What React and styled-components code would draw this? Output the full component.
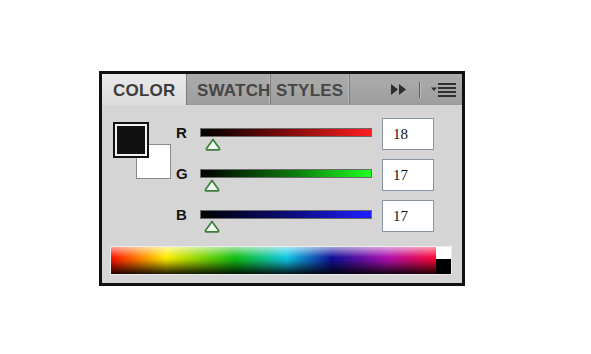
import React from "react";
import styled, { createGlobalStyle } from "styled-components";

const GlobalStyle = createGlobalStyle`
  html, body {
    margin: 0;
    padding: 0;
    background: #ffffff;
  }
  body {
    font-family: "Liberation Sans", Arial, sans-serif;
  }
`;

const channels = [
  { name: "R", value: 18, end: "#ff1f1f", mid: "#8a0c0c" },
  { name: "G", value: 17, end: "#1fff1f", mid: "#0c7a0c" },
  { name: "B", value: 17, end: "#1f1fff", mid: "#0c0c80" },
];

const tabs = [
  { label: "COLOR", width: 85, pad: 11, active: true },
  { label: "SWATCHES", width: 84, pad: 10 },
  { label: "STYLES", width: 79, pad: 5 },
];

const App = () => {
  return (
    <Page>
      <GlobalStyle />
      <Panel>
        <TabBar>
          {tabs.map(t => (
            <Tab key={t.label} active={t.active} w={t.width} pad={t.pad}>
              <TabText>{t.label}</TabText>
            </Tab>
          ))}
          <TabRest>
            <svg width="17" height="11" viewBox="0 0 17 11">
              <path d="M0 0 L7 5.5 L0 11 Z M8 0 L15 5.5 L8 11 Z" fill="#2e2e2e" />
            </svg>
            <Divider />
            <svg width="26" height="14" viewBox="0 0 26 14">
              <path d="M0 4.5 L6 4.5 L3 8 Z" fill="#2e2e2e" />
              <rect x="7" y="0" width="18" height="2" fill="#2e2e2e" />
              <rect x="7" y="4" width="18" height="2" fill="#2e2e2e" />
              <rect x="7" y="8" width="18" height="2" fill="#2e2e2e" />
              <rect x="7" y="12" width="18" height="2" fill="#2e2e2e" />
            </svg>
          </TabRest>
        </TabBar>
        <Body>
          <Top>
            <Swatches>
              <BackSwatch />
              <FrontSwatch />
            </Swatches>
            <Channels>
              {channels.map(c => (
                <Row key={c.name}>
                  <Label>{c.name}</Label>
                  <SliderCell>
                    <Track end={c.end} mid={c.mid}>
                      <Thumb style={{ left: `${(c.value / 255) * 172 - 8}px` }}>
                        <svg width="16" height="13" viewBox="0 0 16 13">
                          <path
                            d="M8 1.5 L14.5 10.5 Q15 11.8 13.6 11.8 L2.4 11.8 Q1 11.8 1.5 10.5 Z"
                            fill="#eef6ee"
                            stroke="#3d7d3d"
                            strokeWidth="1.7"
                            strokeLinejoin="round"
                          />
                        </svg>
                      </Thumb>
                    </Track>
                  </SliderCell>
                  <ValueBox>{c.value}</ValueBox>
                </Row>
              ))}
            </Channels>
          </Top>
          <Spectrum>
            <HueBar />
            <EndCaps>
              <Cap white />
              <Cap />
            </EndCaps>
          </Spectrum>
        </Body>
      </Panel>
    </Page>
  );
};

export default App;

const Page = styled.div`
  padding: 71px 0 0 99px;
`;

const Panel = styled.div`
  width: 366px;
  height: 215px;
  box-sizing: border-box;
  border: 3px solid #111111;
  background-color: #d5d5d5;
  display: flex;
  flex-direction: column;
`;

const TabBar = styled.div`
  height: 30px;
  display: flex;
  background: linear-gradient(#acacac, #9e9e9e);
  border-bottom: 1px solid #9a9a9a;
`;

const Tab = styled.div`
  width: ${props => props.w}px;
  box-sizing: border-box;
  padding: 3px 0 0 ${props => props.pad}px;
  overflow: hidden;
  display: flex;
  align-items: center;
  color: ${props => (props.active ? "#3c3c3c" : "#464646")};
  background: ${props =>
    props.active ? "linear-gradient(#e9e9e9, #dcdcdc)" : "transparent"};
  border-right: 1px solid #7c7c7c;
  box-shadow: ${props => (props.active ? "none" : "inset -1px 0 0 #b8b8b8")};
  margin-bottom: ${props => (props.active ? "-1px" : "0")};
`;

const TabText = styled.span`
  display: block;
  min-width: 0;
  overflow: hidden;
  font-size: 17px;
  font-weight: bold;
  white-space: nowrap;
  letter-spacing: 0.2px;
`;

const TabRest = styled.div`
  flex: 1;
  display: flex;
  align-items: center;
  justify-content: flex-end;
  padding: 1px 5px 0 0;
  gap: 10px;
`;

const Divider = styled.div`
  width: 1px;
  height: 16px;
  background: #5e5e5e;
  box-shadow: 1px 0 0 #bdbdbd;
  margin: 0 1px;
`;

const Body = styled.div`
  flex: 1;
  display: flex;
  flex-direction: column;
  padding: 13px 0 0 0;
`;

const Top = styled.div`
  display: flex;
  padding-left: 11px;
`;

const Swatches = styled.div`
  width: 57px;
  height: 62px;
  position: relative;
  margin-right: 6px;
`;

const FrontSwatch = styled.div`
  position: absolute;
  top: 4px;
  left: 0;
  width: 36px;
  height: 36px;
  box-sizing: border-box;
  background: #111111;
  border: 2px solid #111111;
  box-shadow: inset 0 0 0 2px #f2f2f2;
`;

const BackSwatch = styled.div`
  position: absolute;
  top: 26px;
  left: 23px;
  width: 35px;
  height: 35px;
  box-sizing: border-box;
  background: #ffffff;
  border: 1px solid #8c8c8c;
`;

const Channels = styled.div`
  display: flex;
  flex-direction: column;
  gap: 9px;
`;

const Row = styled.div`
  display: grid;
  grid-template-columns: 24px 182px 52px;
  height: 32px;
`;

const Label = styled.div`
  font-size: 15px;
  font-weight: bold;
  color: #141414;
  padding-top: 6px;
  line-height: 17px;
`;

const SliderCell = styled.div`
  padding-top: 10px;
`;

const Track = styled.div`
  position: relative;
  width: 172px;
  height: 9px;
  box-sizing: border-box;
  border: 1px solid #6a6a6a;
  background: linear-gradient(
    to right,
    #000000 0%,
    ${props => props.mid} 55%,
    ${props => props.end} 100%
  );
`;

const Thumb = styled.div`
  position: absolute;
  top: 9px;
  line-height: 0;
`;

const ValueBox = styled.div`
  box-sizing: border-box;
  height: 32px;
  width: 52px;
  background: #ffffff;
  border: 1px solid #8895a0;
  padding: 0 0 0 10px;
  display: flex;
  align-items: center;
  font-family: "Liberation Serif", "Times New Roman", serif;
  font-size: 15px;
  color: #111111;
`;

const Spectrum = styled.div`
  margin: 14px 0 0 8px;
  width: 342px;
  height: 29px;
  box-sizing: border-box;
  border: 1px solid #ececec;
  display: flex;
`;

const HueBar = styled.div`
  flex: 1;
  background:
    linear-gradient(
      to bottom,
      rgba(255, 255, 255, 0.6) 0%,
      rgba(255, 255, 255, 0) 38%,
      rgba(0, 0, 0, 0.1) 50%,
      rgba(0, 0, 0, 0.88) 100%
    ),
    linear-gradient(
      to right,
      #ff1000 0%,
      #ffee00 17%,
      #10c010 38%,
      #10c8e8 54%,
      #10109a 68%,
      #b010b0 85%,
      #ff0830 100%
    );
`;

const EndCaps = styled.div`
  width: 15px;
  display: flex;
  flex-direction: column;
`;

const Cap = styled.div`
  flex: ${props => (props.white ? "0 0 12px" : "1")};
  background: ${props => (props.white ? "#ffffff" : "#000000")};
`;
